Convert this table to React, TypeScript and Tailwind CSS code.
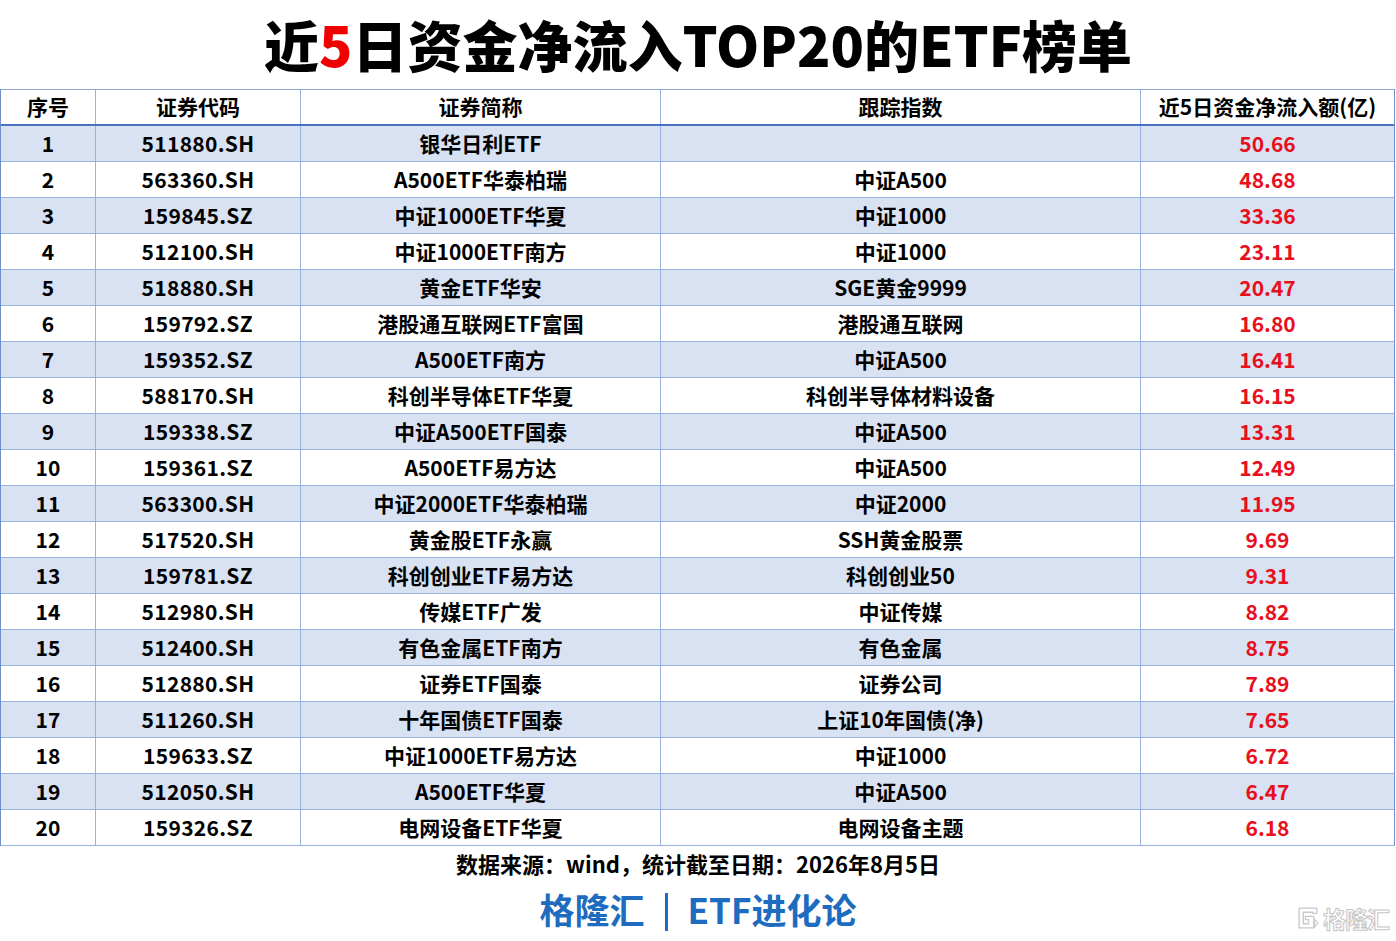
import React from "react";

const rows: [string, string, string, string, string][] = [
  ["1", "511880.SH", "银华日利ETF", "", "50.66"],
  ["2", "563360.SH", "A500ETF华泰柏瑞", "中证A500", "48.68"],
  ["3", "159845.SZ", "中证1000ETF华夏", "中证1000", "33.36"],
  ["4", "512100.SH", "中证1000ETF南方", "中证1000", "23.11"],
  ["5", "518880.SH", "黄金ETF华安", "SGE黄金9999", "20.47"],
  ["6", "159792.SZ", "港股通互联网ETF富国", "港股通互联网", "16.80"],
  ["7", "159352.SZ", "A500ETF南方", "中证A500", "16.41"],
  ["8", "588170.SH", "科创半导体ETF华夏", "科创半导体材料设备", "16.15"],
  ["9", "159338.SZ", "中证A500ETF国泰", "中证A500", "13.31"],
  ["10", "159361.SZ", "A500ETF易方达", "中证A500", "12.49"],
  ["11", "563300.SH", "中证2000ETF华泰柏瑞", "中证2000", "11.95"],
  ["12", "517520.SH", "黄金股ETF永赢", "SSH黄金股票", "9.69"],
  ["13", "159781.SZ", "科创创业ETF易方达", "科创创业50", "9.31"],
  ["14", "512980.SH", "传媒ETF广发", "中证传媒", "8.82"],
  ["15", "512400.SH", "有色金属ETF南方", "有色金属", "8.75"],
  ["16", "512880.SH", "证券ETF国泰", "证券公司", "7.89"],
  ["17", "511260.SH", "十年国债ETF国泰", "上证10年国债(净)", "7.65"],
  ["18", "159633.SZ", "中证1000ETF易方达", "中证1000", "6.72"],
  ["19", "512050.SH", "A500ETF华夏", "中证A500", "6.47"],
  ["20", "159326.SZ", "电网设备ETF华夏", "电网设备主题", "6.18"],
];

const font = { fontFamily: '"Noto Sans CJK SC", "Noto Sans", sans-serif' };

export default function App() {
  return (
    <div className="w-[1396px] h-[941px] bg-white relative overflow-hidden text-black" style={font}>
      <div className="h-[89px] flex items-center justify-center">
        <h1 className="text-[55px] font-black leading-none -mt-[3px]">
          近<span className="text-[#f00000]">5</span>日资金净流入TOP20的ETF榜单
        </h1>
      </div>

      <div className="w-[1395px] border-l border-r border-[#6f8fcb]">
        <div className="flex h-[37px] border-t border-b-2 border-t-[#8ea9db] border-b-[#4a72c0] text-[21px] font-bold">
          <div className="w-[95px] shrink-0 flex items-center justify-center border-r border-[#9bb2de]">序号</div>
          <div className="w-[205px] shrink-0 flex items-center justify-center border-r border-[#9bb2de]">证券代码</div>
          <div className="w-[360px] shrink-0 flex items-center justify-center border-r border-[#9bb2de]">证券简称</div>
          <div className="w-[480px] shrink-0 flex items-center justify-center border-r border-[#9bb2de]">跟踪指数</div>
          <div className="flex-1 flex items-center justify-center">近5日资金净流入额(亿)</div>
        </div>
        {rows.map((r, i) => (
          <div
            key={r[0]}
            className={`flex h-[36px] border-b border-[#9bb2de] text-[21px] font-bold ${i % 2 === 0 ? "bg-[#d9e2f3]" : "bg-white"}`}
          >
            <div className="w-[95px] shrink-0 flex items-center justify-center border-r border-[#9bb2de]">{r[0]}</div>
            <div className="w-[205px] shrink-0 flex items-center justify-center border-r border-[#9bb2de] tracking-[0.3px]">{r[1]}</div>
            <div className="w-[360px] shrink-0 flex items-center justify-center border-r border-[#9bb2de]">{r[2]}</div>
            <div className="w-[480px] shrink-0 flex items-center justify-center border-r border-[#9bb2de]">{r[3]}</div>
            <div className="flex-1 flex items-center justify-center text-[#e8101c]">{r[4]}</div>
          </div>
        ))}
      </div>

      <div className="h-[34px] flex items-center justify-center text-[22px] font-bold">
        数据来源：wind，统计截至日期：2026年8月5日
      </div>
      <div className="h-[58px] flex items-center justify-center text-[35px] font-bold text-[#1d6cc0] gap-[20px]">
        <span>格隆汇</span>
        <span className="w-[3px] h-[38px] bg-[#1d6cc0] mt-[6px]"></span>
        <span>ETF进化论</span>
      </div>

      <div className="absolute left-[1296px] top-[906px] flex items-center gap-[3px]">
        <svg width="24" height="24" viewBox="0 0 23 23">
          <path
            d="M3 2 H20 V7 H16 V6 H7 V17 H12 V13 H9 V10 H17 V21 H3 Z"
            fill="white"
            stroke="#c8c8c8"
            strokeWidth="1.3"
            strokeLinejoin="round"
          />
          <path d="M18 13 L21 16 L18 20 Z" fill="white" stroke="#c8c8c8" strokeWidth="1" />
        </svg>
        <span className="text-[23px] font-bold leading-none text-white [-webkit-text-stroke:1px_#c6c6c6] tracking-[-1px]">
          格隆汇
        </span>
      </div>
    </div>
  );
}
